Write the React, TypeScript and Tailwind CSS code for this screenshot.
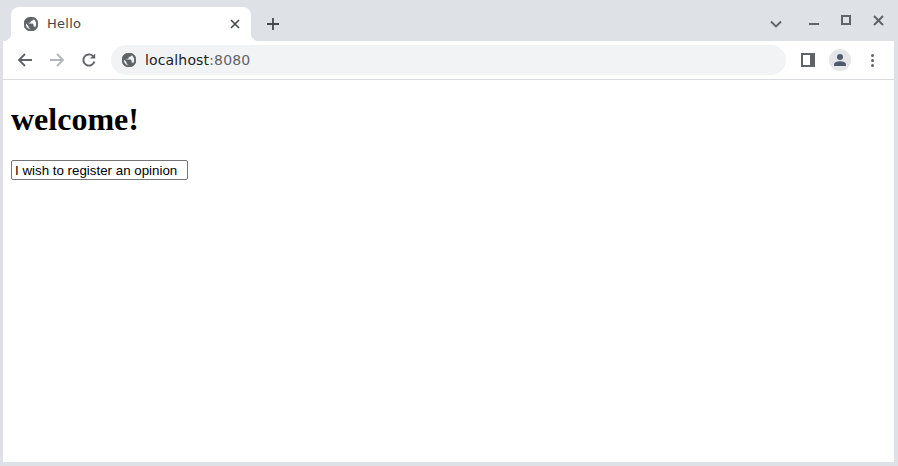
const Globe = ({ className }: { className: string }) => (
  <svg viewBox="2 2 20 20" className={className}>
    <path
      fill="#5f6368"
      stroke="#5f6368"
      strokeWidth="1.3"
      d="M12 2C6.48 2 2 6.48 2 12s4.48 10 10 10 10-4.48 10-10S17.52 2 12 2zm-1 17.93c-3.95-.49-7-3.85-7-7.93 0-.62.08-1.21.21-1.79L9 15v1c0 1.1.9 2 2 2v1.93zm6.9-2.54c-.26-.81-1-1.39-1.9-1.39h-1v-3c0-.55-.45-1-1-1H8v-2h2c.55 0 1-.45 1-1V7h2c1.1 0 2-.9 2-2v-.41c2.93 1.19 5 4.06 5 7.41 0 2.08-.8 3.97-2.1 5.39z"
    />
  </svg>
);

export default function App() {
  return (
    <div className="flex h-[466px] w-[898px] flex-col overflow-hidden bg-[#dee1e6] pb-1 pl-[3px] pr-1 font-['DejaVu_Sans',sans-serif]">
      <div className="flex h-[41px] shrink-0 items-end pl-2">
        <div className="relative flex h-[34px] w-[240px] items-center rounded-t-lg bg-white pl-[13px] pr-[11px]">
          <span className="absolute -left-2 bottom-0 h-2 w-2 bg-[radial-gradient(circle_at_0_0,#dee1e6_8px,#ffffff_8.5px)]" />
          <span className="absolute -right-2 bottom-0 h-2 w-2 bg-[radial-gradient(circle_at_100%_0,#dee1e6_8px,#ffffff_8.5px)]" />
          <Globe className="h-[14px] w-[14px] shrink-0" />
          <span className="ml-[9px] flex-1 text-[13px] tracking-[0.25px] text-[#45474a]">Hello</span>
          <svg viewBox="0 0 10 10" className="h-[10px] w-[10px]">
            <path d="M1 1 L9 9 M9 1 L1 9" stroke="#45474a" strokeWidth="1.6" />
          </svg>
        </div>
        <div className="mb-[10px] ml-[15px] h-[14px] w-[14px]">
          <svg viewBox="0 0 14 14" className="h-[14px] w-[14px]">
            <path d="M7 1 V13 M1 7 H13" stroke="#45474a" strokeWidth="1.8" />
          </svg>
        </div>
        <div className="flex-1" />
        <div className="flex h-full w-[130px] shrink-0 items-start">
          <svg viewBox="0 0 12 8" className="ml-[6px] mt-5 h-2 w-[12px]">
            <path d="M1 1.5 L6 6.5 L11 1.5" fill="none" stroke="#5f6368" strokeWidth="1.8" />
          </svg>
          <div className="ml-[27px] mt-[23px] h-[2px] w-[10px] bg-[#5f6368]" />
          <div className="ml-[22px] mt-[15px] h-[10px] w-[10px] border-2 border-[#5f6368]" />
          <svg viewBox="0 0 11 11" className="ml-[22px] mt-[15px] h-[11px] w-[11px]">
            <path d="M1 1 L10 10 M10 1 L1 10" stroke="#5f6368" strokeWidth="2" />
          </svg>
        </div>
      </div>

      <div className="flex h-[39px] shrink-0 items-center border-b border-[#dadce0] bg-white">
        <svg viewBox="0 0 16 16" className="ml-[14px] h-4 w-4">
          <path d="M15 8 H2 M8 2 L2 8 L8 14" fill="none" stroke="#5f6368" strokeWidth="1.9" />
        </svg>
        <svg viewBox="0 0 16 16" className="ml-4 h-4 w-4">
          <path d="M1 8 H14 M8 2 L14 8 L8 14" fill="none" stroke="#b4b6b9" strokeWidth="1.9" />
        </svg>
        <svg viewBox="0 0 16 16" className="ml-4 h-4 w-4">
          <path d="M13.4 9.5 A5.6 5.6 0 1 1 12 4.1" fill="none" stroke="#5f6368" strokeWidth="1.9" />
          <path d="M14.2 1.4 V6.6 H9 Z" fill="#5f6368" />
        </svg>
        <div className="ml-[14px] flex h-[30px] w-[675px] items-center rounded-full bg-[#f1f3f4] pl-[11px]">
          <Globe className="h-[14px] w-[14px] shrink-0" />
          <span className="ml-[9px] text-[14px] tracking-[0.15px] text-[#202124]">
            localhost<span className="text-[#5f6368]">:8080</span>
          </span>
        </div>
        <div className="ml-[15px] h-[14px] w-[14px] border-2 border-r-[5px] border-[#5f6368] bg-white" />
        <div className="ml-[14px] flex h-[22px] w-[22px] items-center justify-center rounded-full bg-[#e4e6ea]">
          <svg viewBox="0 0 14 14" className="h-[14px] w-[14px]">
            <circle cx="7" cy="4" r="3" fill="#505a6b" />
            <path d="M1 13 V11.4 C1 9.2 4.4 8.2 7 8.2 C9.6 8.2 13 9.2 13 11.4 V13 Z" fill="#505a6b" />
          </svg>
        </div>
        <div className="ml-[20px] flex w-[4px] flex-col gap-[2px]">
          <span className="h-[3px] w-[3px] rounded-full bg-[#5f6368]" />
          <span className="h-[3px] w-[3px] rounded-full bg-[#5f6368]" />
          <span className="h-[3px] w-[3px] rounded-full bg-[#5f6368]" />
        </div>
      </div>

      <main className="flex-1 bg-white px-2 py-[21px] font-['Liberation_Serif',serif]">
        <h1 className="text-[32px] font-bold leading-[37px] text-black">welcome!</h1>
        <div className="mt-[22px]">
          <input
            readOnly
            value="I wish to register an opinion"
            className="block h-5 w-[177px] rounded-[2px] border border-[#767676] px-[3px] font-['Liberation_Sans',sans-serif] text-[13.33px] text-black outline-none"
          />
        </div>
      </main>
    </div>
  );
}
